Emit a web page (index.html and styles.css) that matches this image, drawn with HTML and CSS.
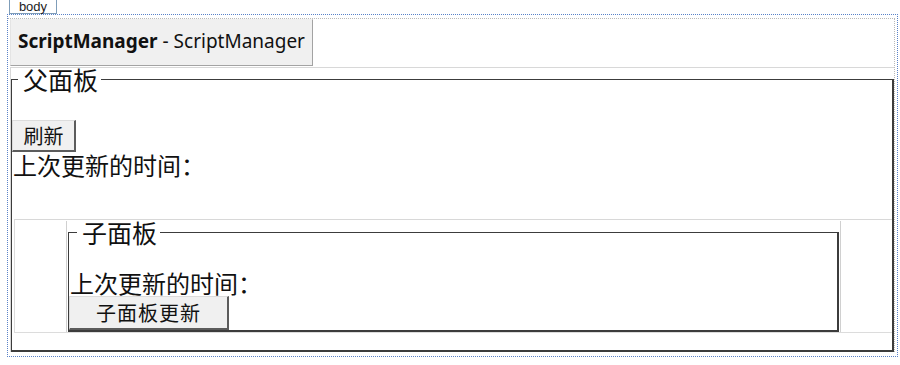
FILE: index.html
```html
<!DOCTYPE html>
<html lang="zh-CN">
<head>
    <meta charset="UTF-8">
    <title>UpdatePanel 嵌套</title>
    <link rel="stylesheet" href="styles.css">
</head>
<body>
    <div class="tag">body</div>
    <div class="page">
        <form class="form">
            <div class="script-manager"><b>ScriptManager</b> - ScriptManager</div>
            <div class="update-panel outer-panel">
                <fieldset class="group">
                    <legend>父面板</legend>
                    <button type="button" class="btn btn-refresh">刷新</button>
                    <div class="time">上次更新的时间：</div>
                    <div class="update-panel inner-panel">
                        <div class="inner-box">
                            <fieldset class="group inner-group">
                                <legend>子面板</legend>
                                <div class="time inner-time">上次更新的时间：</div>
                                <button type="button" class="btn btn-child">子面板更新</button>
                            </fieldset>
                        </div>
                    </div>
                </fieldset>
            </div>
        </form>
    </div>
</body>
</html>
```

FILE: styles.css
```css
body {
    margin: 0;
    background-color: #ffffff;
    color: #111111;
    font-family: "Noto Sans CJK SC", sans-serif;
}
.tag {
    margin-left: 9px;
    width: 48px;
    height: 14px;
    box-sizing: border-box;
    border: 1px solid #7f9db9;
    border-top: none;
    font-family: "Liberation Sans", sans-serif;
    font-size: 13px;
    line-height: 14px;
    text-align: center;
    color: #222222;
}
.page {
    margin-left: 7px;
    width: 891px;
    height: 343px;
    box-sizing: border-box;
    border: 1px dotted #5a82c8;
}
.form {
    margin: 3px 2px 0 0;
    border-top: 1px dotted #b8b8b8;
    border-right: 1px dotted #b8b8b8;
}
.script-manager {
    margin-left: 2px;
    width: 303px;
    height: 47px;
    box-sizing: border-box;
    padding: 0 0 3px 7px;
    display: flex;
    align-items: center;
    background-color: #f0f0f0;
    border: 1px solid;
    border-color: #f0f0f0 #a3a3a3 #a3a3a3 #e4e4e4;
    font-family: "Noto Sans", sans-serif;
    font-size: 19px;
    white-space: pre;
}
.script-manager b {
    font-weight: bold;
}
.update-panel {
    border-top: 1px solid #d8d8d8;
}
.outer-panel {
    margin: 1px 0 0 2px;
    border-left: 1px solid #d8d8d8;
}
.group {
    margin: 0;
    padding: 0 0 17px 0;
    min-width: 0;
    border: 1px solid #3c3c3c;
    border-right-width: 2px;
    border-bottom-width: 2px;
}
.group legend {
    margin-left: 6px;
    padding: 0 3px 0 5px;
    font-size: 25px;
    line-height: 22px;
}
.btn {
    display: block;
    padding: 0;
    background-color: #f0f0f0;
    color: #111111;
    font-family: "Noto Sans CJK SC", sans-serif;
    font-size: 20px;
    line-height: 24px;
    border: 1px solid;
    border-width: 1px 2px 2px 1px;
    border-color: #dcdcdc #5c5c5c #5c5c5c #dcdcdc;
}
.btn-refresh {
    margin-top: 30px;
    width: 64px;
    height: 32px;
}
.time {
    font-size: 24px;
    line-height: 26px;
    padding-left: 1px;
}
.inner-panel {
    margin: 41px 0 0 2px;
    border-left: 1px solid #dcdcdc;
    border-bottom: 1px solid #dcdcdc;
}
.inner-box {
    width: 775px;
    margin: 0 auto;
    box-sizing: border-box;
    border-left: 1px solid #d0d0d0;
    border-right: 1px solid #d0d0d0;
}
.inner-group {
    margin: 1px 1px 0 1px;
    padding: 0;
}
.inner-group legend {
    margin-left: 8px;
}
.inner-time {
    margin-top: 27px;
}
.btn-child {
    width: 160px;
    height: 34px;
    letter-spacing: 1px;
}
```
